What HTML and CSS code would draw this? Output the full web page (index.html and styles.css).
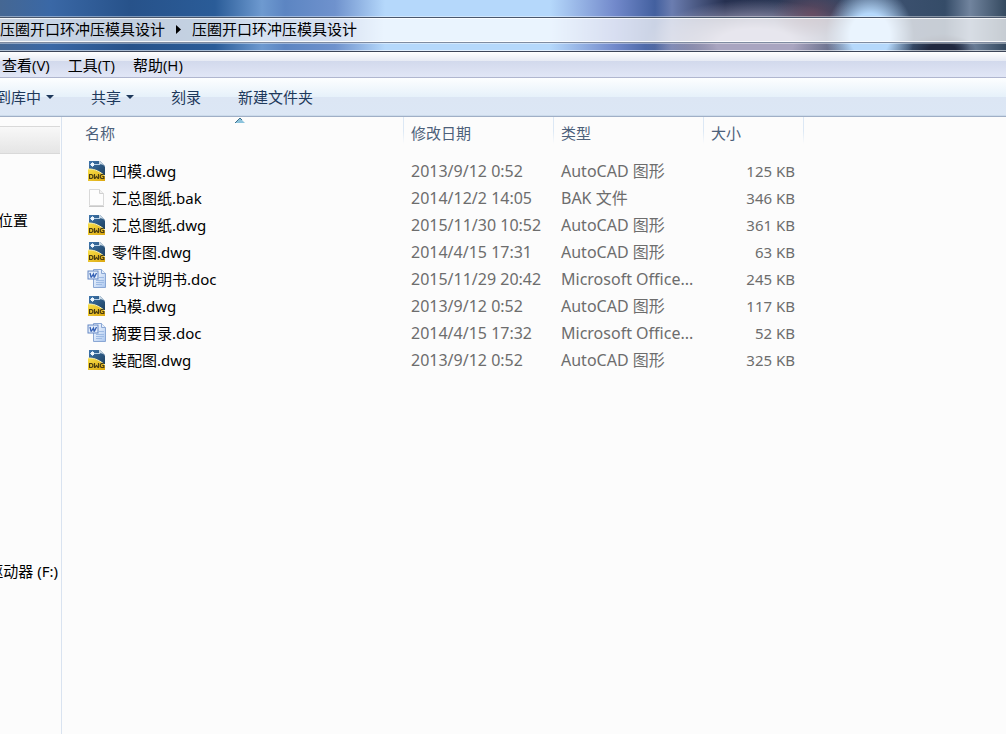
FILE: index.html
```html
<!DOCTYPE html>
<html lang="zh-CN">
<head>
    <meta charset="UTF-8">
    <meta name="viewport" content="width=device-width, initial-scale=1.0">
    <title>压圈开口环冲压模具设计</title>
    <link rel="stylesheet" href="styles.css">
</head>
<body>
    <svg class="sprites" aria-hidden="true">
        <defs>
            <linearGradient id="dwgBlue" x1="0" y1="0" x2="1" y2="1">
                <stop offset="0" stop-color="#3f76ad"/>
                <stop offset="1" stop-color="#1d3f5e"/>
            </linearGradient>
            <linearGradient id="dwgYellow" x1="0" y1="0" x2="1" y2="1">
                <stop offset="0" stop-color="#f9e04a"/>
                <stop offset="1" stop-color="#dba60f"/>
            </linearGradient>
            <linearGradient id="docPage" x1="0" y1="0" x2="1" y2="1">
                <stop offset="0" stop-color="#ffffff"/>
                <stop offset="1" stop-color="#a9c6ef"/>
            </linearGradient>
        </defs>
        <symbol id="dwg" viewBox="0 0 20 22">
            <path d="M2 1h11l5 5v10H2z" fill="url(#dwgBlue)"/>
            <path d="M12 1h1l5 5v1c-1-2-3-3-6-2.500z" fill="#c9d8e4"/>
            <path d="M1 9h1c6 0 10 2 16 7v5H1z" fill="url(#dwgYellow)"/>
            <path d="M1 9h1c6 0 11 2.500 16 7" fill="none" stroke="#f6efb6"/>
            <path d="M3 4.500h10M5.500 2v5" stroke="#b9d3ea" fill="none"/>
            <rect x="4" y="3" width="3" height="3" fill="#f0f7fd"/>
            <path d="M2.600 14.500v4h2l1.200-1v-2l-1.200-1zM7.500 14v4.500h.5l1.500-2 1.500 2h.5V14M16.800 14.500h-2.500l-1 1v2l1 1h2.500v-2h-1.500" fill="none" stroke="#4a3e12" stroke-width="1.200"/>
        </symbol>
        <symbol id="bak" viewBox="0 0 20 22">
            <path d="M2.500 2.500h10l4 4v12h-14z" fill="#fdfdfd" stroke="#d9d9d9"/>
            <path d="M12.500 2.500v4h4" fill="#f1f1f1" stroke="#d0d0d0"/>
            <path d="M2 19.500h15" stroke="#c9c9c9"/>
        </symbol>
        <symbol id="doc" viewBox="0 0 20 22">
            <path d="M6.500 1.500h8l4 4v14h-12z" fill="url(#docPage)" stroke="#8aa7d4"/>
            <path d="M14.500 1.500v4h4" fill="#e5effb" stroke="#8aa7d4"/>
            <path d="M12 9.500h5M9 12.500h8M9 14.500h8M9 16.500h6" stroke="#9ebbe4"/>
            <rect x="1" y="3" width="10" height="8" fill="#e4eefb" stroke="#6487c4"/>
            <path d="M3 5l1 4h.5L6.500 6l.5 3h.5L9.500 5" fill="none" stroke="#3460b4" stroke-width="1.300"/>
        </symbol>
    </svg>

    <header class="glass">
        <nav class="address">
            <a href="#">压圈开口环冲压模具设计</a>
            <svg class="crumb-arrow" viewBox="0 0 5 9"><path d="M0 0l5 4.500L0 9z"/></svg>
            <a href="#">压圈开口环冲压模具设计</a>
        </nav>
    </header>

    <div class="menubar">
        <button>查看(V)</button>
        <button>工具(T)</button>
        <button>帮助(H)</button>
    </div>

    <div class="toolbar">
        <button>到库中 <svg class="caret" viewBox="0 0 8 4"><path d="M0 0h8L4 4z"/></svg></button>
        <button>共享 <svg class="caret" viewBox="0 0 8 4"><path d="M0 0h8L4 4z"/></svg></button>
        <button>刻录</button>
        <button>新建文件夹</button>
    </div>

    <main class="explorer">
        <nav class="sidebar">
            <div class="selected"></div>
            <a class="recent" href="#">位置</a>
            <a class="drive" href="#">驱动器 (F:)</a>
        </nav>
        <table class="files">
            <colgroup>
                <col class="col-name">
                <col class="col-date">
                <col class="col-type">
                <col class="col-size">
                <col>
            </colgroup>
            <thead>
                <tr>
                    <th>名称<svg class="sort" viewBox="0 0 10 5"><path d="M0 5l5-5 5 5z" fill="#8cc3dc"/><path d="M0 5l5-5 2 2" fill="none" stroke="#3c6f8c"/></svg></th>
                    <th>修改日期</th>
                    <th>类型</th>
                    <th>大小</th>
                    <td></td>
                </tr>
            </thead>
            <tbody>
                <tr>
                    <td><a href="#"><svg class="icon"><use href="#dwg"/></svg>凹模.dwg</a></td>
                    <td>2013/9/12 0:52</td>
                    <td>AutoCAD 图形</td>
                    <td>125 KB</td>
                </tr>
                <tr>
                    <td><a href="#"><svg class="icon"><use href="#bak"/></svg>汇总图纸.bak</a></td>
                    <td>2014/12/2 14:05</td>
                    <td>BAK 文件</td>
                    <td>346 KB</td>
                </tr>
                <tr>
                    <td><a href="#"><svg class="icon"><use href="#dwg"/></svg>汇总图纸.dwg</a></td>
                    <td>2015/11/30 10:52</td>
                    <td>AutoCAD 图形</td>
                    <td>361 KB</td>
                </tr>
                <tr>
                    <td><a href="#"><svg class="icon"><use href="#dwg"/></svg>零件图.dwg</a></td>
                    <td>2014/4/15 17:31</td>
                    <td>AutoCAD 图形</td>
                    <td>63 KB</td>
                </tr>
                <tr>
                    <td><a href="#"><svg class="icon"><use href="#doc"/></svg>设计说明书.doc</a></td>
                    <td>2015/11/29 20:42</td>
                    <td>Microsoft Office...</td>
                    <td>245 KB</td>
                </tr>
                <tr>
                    <td><a href="#"><svg class="icon"><use href="#dwg"/></svg>凸模.dwg</a></td>
                    <td>2013/9/12 0:52</td>
                    <td>AutoCAD 图形</td>
                    <td>117 KB</td>
                </tr>
                <tr>
                    <td><a href="#"><svg class="icon"><use href="#doc"/></svg>摘要目录.doc</a></td>
                    <td>2014/4/15 17:32</td>
                    <td>Microsoft Office...</td>
                    <td>52 KB</td>
                </tr>
                <tr>
                    <td><a href="#"><svg class="icon"><use href="#dwg"/></svg>装配图.dwg</a></td>
                    <td>2013/9/12 0:52</td>
                    <td>AutoCAD 图形</td>
                    <td>325 KB</td>
                </tr>
            </tbody>
        </table>
    </main>
</body>
</html>
```
FILE: styles.css
```css
* {
    box-sizing: border-box;
}

body {
    margin: 0;
    min-height: 100vh;
    display: flex;
    flex-direction: column;
    overflow: hidden;
    background: #fcfcfc;
    font-family: 'Noto Sans', 'Noto Sans CJK SC', sans-serif;
    font-size: 15px;
    line-height: 20px;
    color: #000;
}

a {
    color: inherit;
    text-decoration: none;
}

button {
    display: flex;
    align-items: center;
    padding: 0;
    border: none;
    background: none;
    font: inherit;
    color: inherit;
    white-space: nowrap;
}

.sprites {
    position: absolute;
    width: 0;
    height: 0;
}

/* desktop showing through the window frame */
.glass {
    padding: 17px 0 8px;
    border-bottom: 1px solid #3c4558;
    box-shadow: inset 0 -1px rgba(255, 255, 255, 0.6);
    background:
        radial-gradient(ellipse 44px 50px at 870px 36px, #b5d8fb 45%, transparent 100%),
        radial-gradient(ellipse 34px 16px at 942px 50px, #20283f 40%, transparent 100%),
        radial-gradient(ellipse 40px 24px at 812px 14px, rgba(110, 75, 95, 0.8), transparent),
        radial-gradient(ellipse 110px 44px at 755px 44px, #a9a5c0 35%, transparent 100%),
        linear-gradient(90deg, #456793 0, #3a68a6 50px, #27528a 130px, #2a5c98 215px, #6e9ad0 262px, #5c85c2 285px, #6f92cd 335px, #b5d8fb 385px, #b5d8fb 550px, #7289cb 615px, #43609f 655px, #6b7db0 672px, #263050 725px, #2e3b58 790px, #3b506e 900px, #354c68 945px, #71849e 970px, #34495f 1006px);
}

.address {
    display: flex;
    align-items: center;
    height: 26px;
    padding-bottom: 2px;
    border-top: 1px solid #4a576c;
    border-bottom: 1px solid #7f8ba0;
    box-shadow: inset 0 1px rgba(255, 255, 255, 0.8), inset 0 -1px rgba(255, 255, 255, 0.8), 0 -1px rgba(255, 255, 255, 0.4), 0 1px rgba(255, 255, 255, 0.4);
    background: rgba(255, 255, 255, 0.72);
}

.crumb-arrow {
    width: 5px;
    height: 9px;
    margin: 0 11px;
}

.menubar {
    display: flex;
    gap: 18px;
    height: 26px;
    padding: 0 2px;
    border-bottom: 1px solid #b0b6cf;
    background: linear-gradient(#fff, #e6eaf4 9px, #d2d9ec 9px, #e1e6f6);
    font-family: 'Open Sans', 'Noto Sans CJK SC', sans-serif;
}

.toolbar {
    display: flex;
    gap: 37px;
    height: 39px;
    margin-left: -4px;
    border-bottom: 1px solid #a0afc6;
    box-shadow: inset 0 -1px #ccdbeb;
    background: linear-gradient(#fdfeff, #e6f1fa 19px, #dce6f4 19px, #dce7f5);
    color: #1e395b;
}

.caret {
    width: 8px;
    height: 4px;
    margin-left: 5px;
    fill: #1e395b;
}

.explorer {
    flex: 1;
    display: flex;
}

.sidebar {
    flex: none;
    display: flex;
    flex-direction: column;
    width: 62px;
    padding-top: 9px;
    border-right: 1px solid #d9e3f0;
    overflow: hidden;
}

.selected {
    height: 28px;
    margin-right: 1px;
    border: solid #d9d9d9;
    border-width: 1px 0;
    background: linear-gradient(#f8f8f8, #e5e5e5);
}

.recent {
    margin: 56px 0 0 -2px;
}

.drive {
    display: flex;
    justify-content: flex-end;
    margin: 331px 3px 0 0;
    white-space: nowrap;
}

.files {
    flex: 1;
    align-self: flex-start;
    table-layout: fixed;
    border-collapse: collapse;
    color: #6d6d6d;
}

.col-name {
    width: 342px;
}

.col-date,
.col-type {
    width: 150px;
}

.col-size {
    width: 100px;
}

th,
td {
    padding: 0 0 0 7px;
    text-align: left;
    white-space: nowrap;
}

th {
    position: relative;
    height: 40px;
    padding-bottom: 9px;
    font-weight: normal;
    color: #4c607a;
    background: linear-gradient(#dce8f5 14px, #fcfcfc 27px) right top / 1px 27px no-repeat;
}

th:first-child {
    padding-left: 23px;
}

.sort {
    position: absolute;
    top: 1px;
    left: 173px;
    width: 10px;
    height: 5px;
}

tbody td {
    height: 27px;
    font-size: 16px;
}

tbody td:first-child {
    padding-left: 25px;
    font-size: 15px;
    color: #000;
}

tbody td:nth-child(4) {
    padding-right: 9px;
    font-size: 15px;
    text-align: right;
}

td a {
    display: flex;
    align-items: center;
    gap: 5px;
}

.icon {
    width: 20px;
    height: 22px;
}
```
